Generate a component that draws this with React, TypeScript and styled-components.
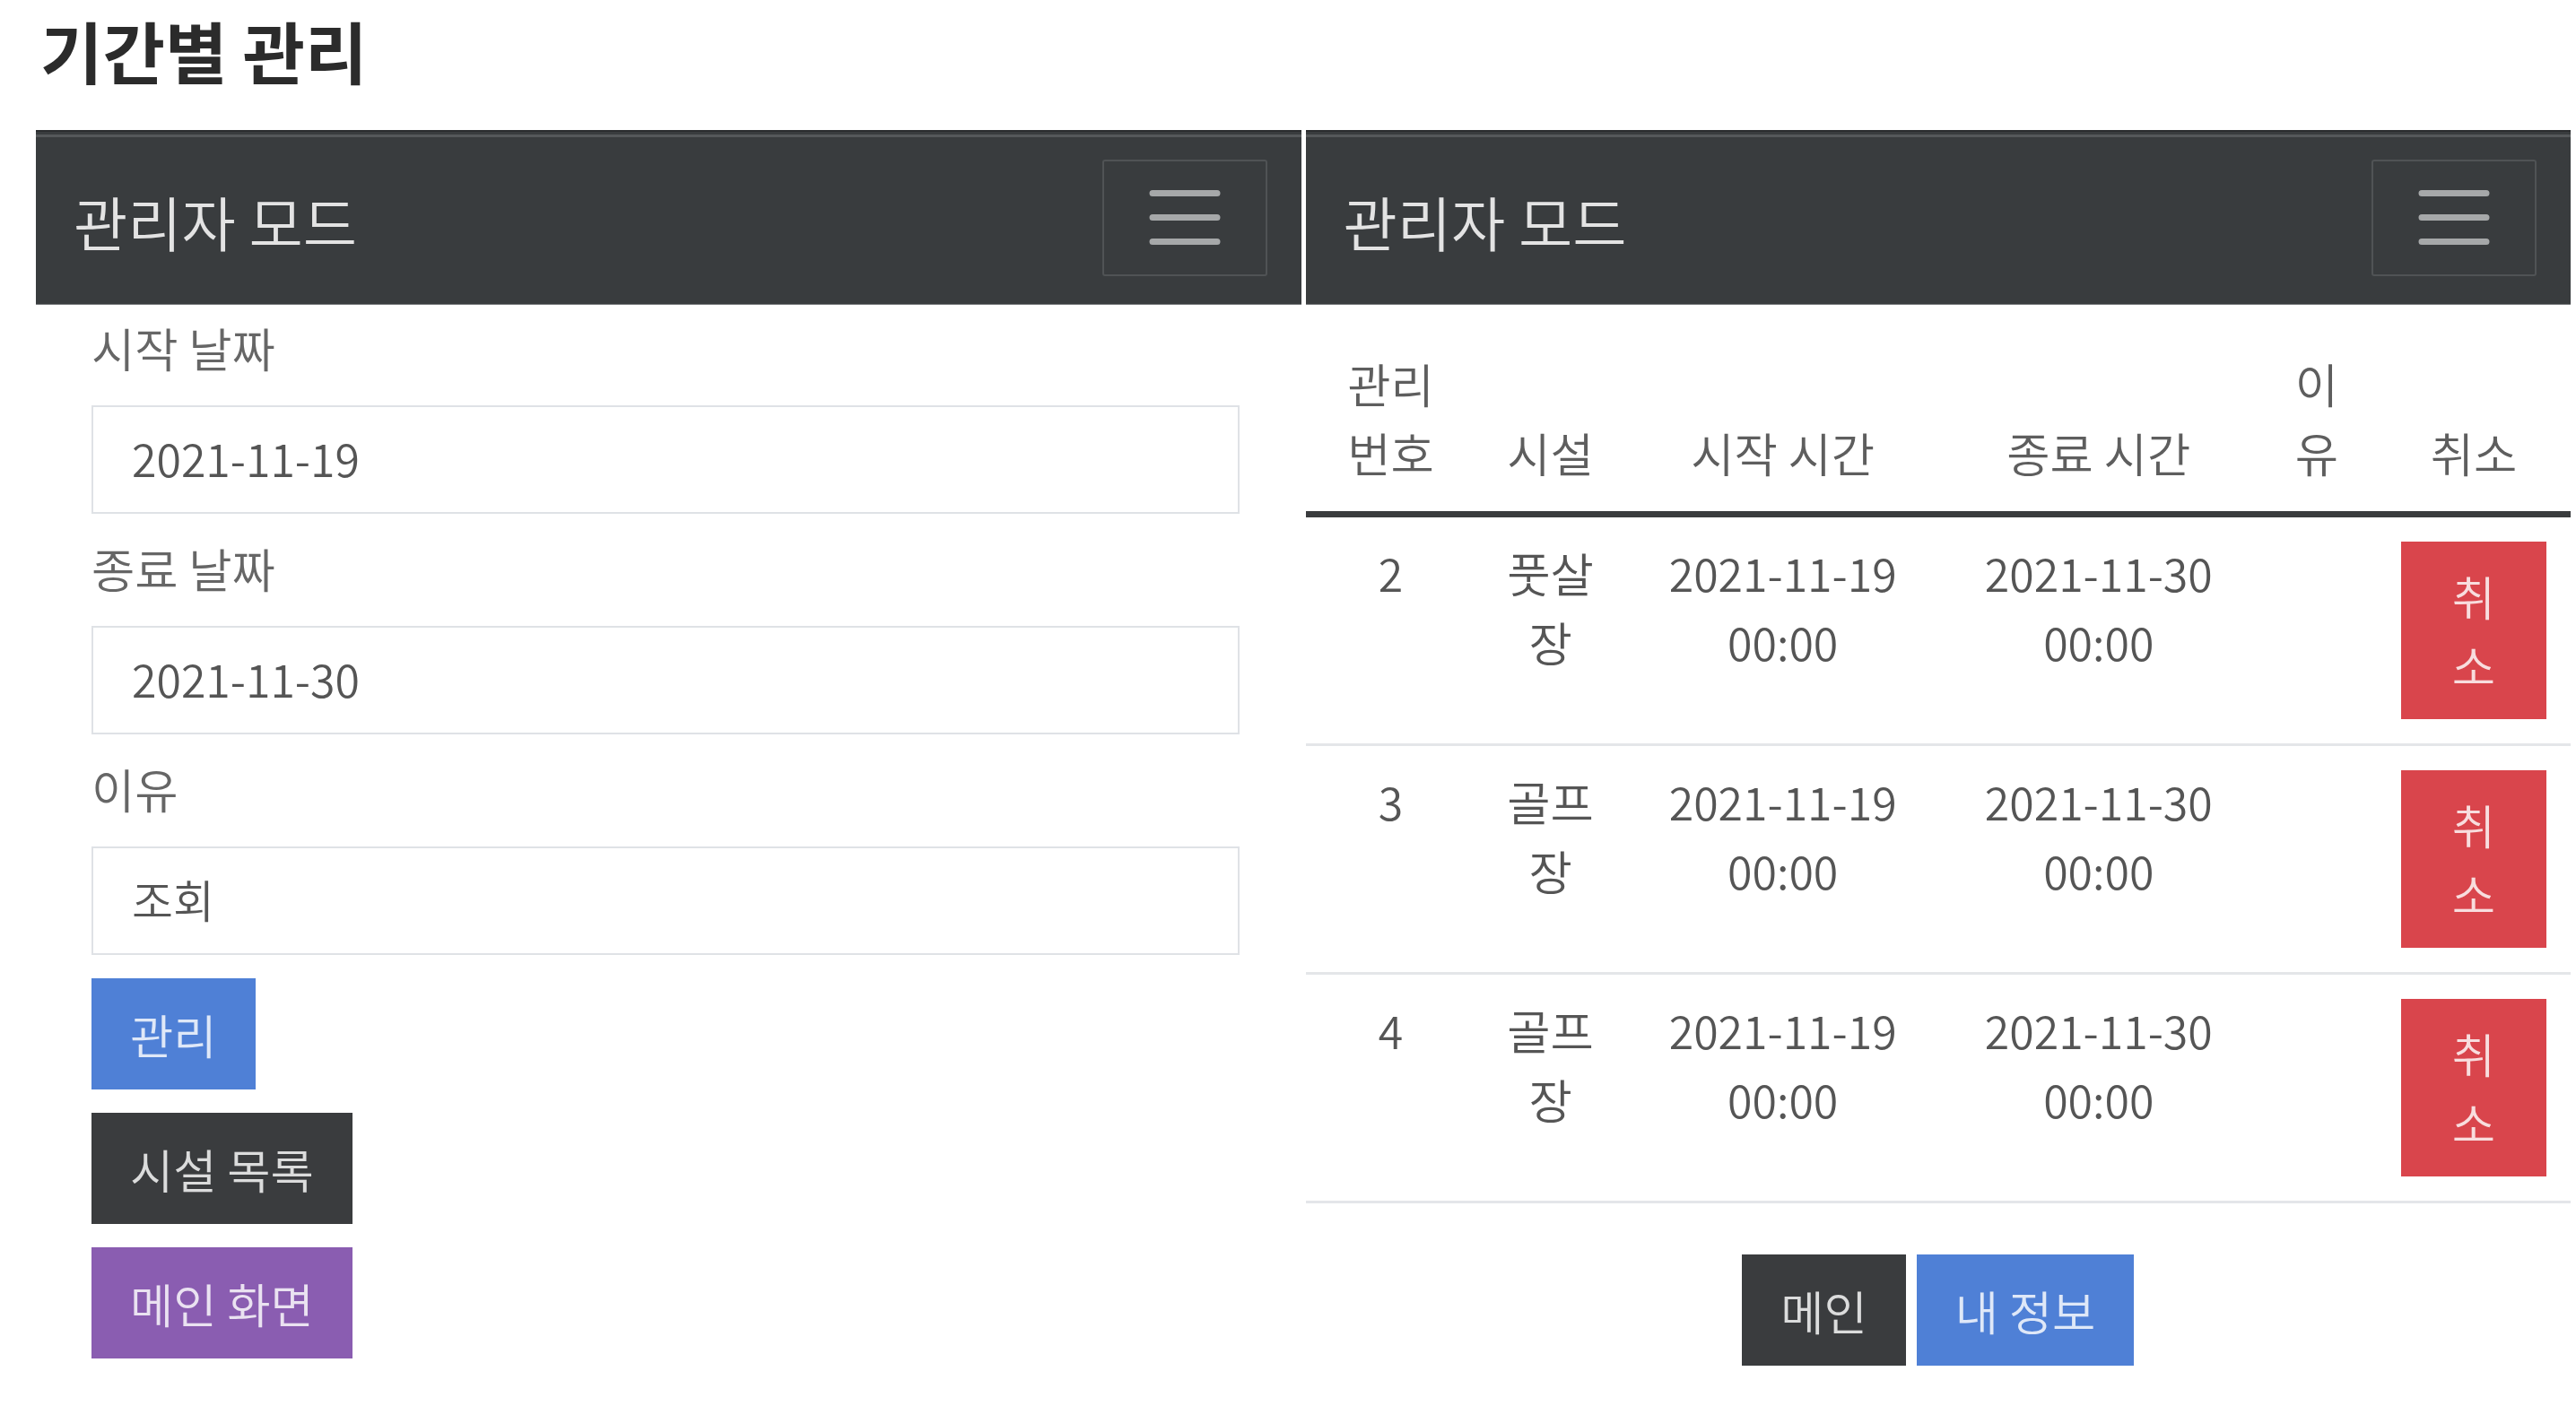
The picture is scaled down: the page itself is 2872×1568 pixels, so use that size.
import React from "react";
import styled, { createGlobalStyle } from "styled-components";

const GlobalStyle = createGlobalStyle`
  * { box-sizing: border-box; }
  html, body { margin: 0; padding: 0; background: #ffffff; }
  body {
    font-family: "Noto Sans CJK KR", "Noto Sans", sans-serif;
    font-weight: 350;
    color: #555555;
  }
`;

const Page = styled.div`
  padding: 10px 6px 40px 40px;
`;

const Title = styled.h1`
  margin: 0 0 0 5px;
  font-size: 75.5px;
  line-height: 1.2;
  font-weight: 700;
  color: #2b2b2b;
`;

const Panels = styled.div`
  display: grid;
  grid-template-columns: 1fr 1fr;
  column-gap: 5px;
  margin-top: 44px;
  align-items: start;
`;

const Panel = styled.section`
  display: flex;
  flex-direction: column;
`;

const Navbar = styled.nav`
  height: 195px;
  display: flex;
  align-items: center;
  justify-content: space-between;
  padding: 0 38px 0 42px;
  background: #393c3e;
  border-top: 2px solid #2a2c2e;
  border-bottom: 1px solid #7a7d7f;
  box-shadow: inset 0 3px 0 #393c3e, inset 0 6px 0 #55585a;
`;

const Brand = styled.span`
  font-size: 65.5px;
  line-height: 1.45;
  padding-top: 10px;
  color: rgba(255, 255, 255, 0.86);
`;

const Toggler = styled.button`
  width: 184px;
  height: 130px;
  display: flex;
  align-items: center;
  justify-content: center;
  background: transparent;
  border: 2px solid #505355;
  border-radius: 3px;
  padding: 0;
`;

const Form = styled.form`
  padding: 8px 69px 0 62px;
  display: flex;
  flex-direction: column;
`;

const FieldLabel = styled.label`
  display: block;
  font-size: 52.5px;
  line-height: 78px;
  color: #666666;
  margin-bottom: 26px;
`;

const TextInput = styled.input`
  display: block;
  width: 100%;
  height: 121px;
  margin: 0 0 21px;
  padding: 0 43px 5px;
  border: 2px solid #dfe2e6;
  border-radius: 0;
  background: #ffffff;
  font-family: inherit;
  font-weight: inherit;
  font-size: 50px;
  color: #555555;
  outline: none;
`;

const ButtonStack = styled.div`
  display: flex;
  flex-direction: column;
  align-items: flex-start;
  gap: 26px;
  margin-top: 5px;
`;

type Variant = "blue" | "dark" | "purple" | "red";

const bg: Record<Variant, string> = {
  blue: "#4f80d6",
  dark: "#3a3c3e",
  purple: "#8a5db1",
  red: "#d9454c",
};

const ActionButton = styled.button<{ $variant: Variant }>`
  display: inline-block;
  padding: ${(p) => (p.$variant === "red" ? "22px 43px" : "23px 43px")};
  border: none;
  border-radius: 0;
  background: ${(p) => bg[p.$variant]};
  color: rgba(255, 255, 255, 0.82);
  font-family: inherit;
  font-weight: inherit;
  font-size: 52.5px;
  line-height: ${(p) => (p.$variant === "red" ? "77px" : "78px")};
  text-align: center;
  cursor: pointer;
`;

const Table = styled.table`
  width: 100%;
  margin-top: 23px;
  border-collapse: collapse;
  table-layout: fixed;
  font-size: 50px;
  line-height: 77px;
  color: #555555;
`;

const HeadCell = styled.th`
  padding: 26px 26px 27px;
  vertical-align: bottom;
  text-align: center;
  font-weight: inherit;
  font-size: 52.5px;
  color: #5e5e5e;
  border-bottom: 7px solid #3a3c3e;
`;

const Cell = styled.td<{ $hangul?: boolean; $action?: boolean }>`
  padding: ${(p) => (p.$action ? "27px" : "23px 27px 31px")};
  vertical-align: top;
  text-align: center;
  font-size: ${(p) => (p.$hangul ? "52.5px" : "50px")};
  border-bottom: 3px solid #e4e6e9;
`;

const FooterButtons = styled.div`
  display: flex;
  justify-content: center;
  gap: 12px;
  margin-top: 57px;
`;

const MenuIcon = () => (
  <svg width="80" height="61" viewBox="0 0 80 61" aria-hidden="true">
    <path
      d="M4 3.5H76M4 30.5H76M4 57.5H76"
      stroke="#a6a8a9"
      strokeWidth="7"
      strokeLinecap="round"
      fill="none"
    />
  </svg>
);

const AdminNav = () => (
  <Navbar>
    <Brand>관리자 모드</Brand>
    <Toggler type="button" aria-label="메뉴">
      <MenuIcon />
    </Toggler>
  </Navbar>
);

const rows = [
  { id: 2, facility: "풋살장", start: "2021-11-19 00:00", end: "2021-11-30 00:00", reason: "" },
  { id: 3, facility: "골프장", start: "2021-11-19 00:00", end: "2021-11-30 00:00", reason: "" },
  { id: 4, facility: "골프장", start: "2021-11-19 00:00", end: "2021-11-30 00:00", reason: "" },
];

const colWidths = [190, 166, 352, 352, 134, 216];

export default function App() {
  return (
    <>
      <GlobalStyle />
      <Page>
        <Title>기간별 관리</Title>
        <Panels>
          <Panel>
            <AdminNav />
            <Form onSubmit={(e) => e.preventDefault()}>
              <FieldLabel htmlFor="start">시작 날짜</FieldLabel>
              <TextInput id="start" defaultValue="2021-11-19" />
              <FieldLabel htmlFor="end">종료 날짜</FieldLabel>
              <TextInput id="end" defaultValue="2021-11-30" />
              <FieldLabel htmlFor="reason">이유</FieldLabel>
              <TextInput id="reason" defaultValue="조회" />
              <ButtonStack>
                <ActionButton type="submit" $variant="blue">관리</ActionButton>
                <ActionButton type="button" $variant="dark">시설 목록</ActionButton>
                <ActionButton type="button" $variant="purple">메인 화면</ActionButton>
              </ButtonStack>
            </Form>
          </Panel>
          <Panel>
            <AdminNav />
            <Table>
              <colgroup>
                {colWidths.map((w, i) => (
                  <col key={i} style={{ width: w }} />
                ))}
              </colgroup>
              <thead>
                <tr>
                  <HeadCell>관리 번호</HeadCell>
                  <HeadCell>시설</HeadCell>
                  <HeadCell>시작 시간</HeadCell>
                  <HeadCell>종료 시간</HeadCell>
                  <HeadCell>이유</HeadCell>
                  <HeadCell>취소</HeadCell>
                </tr>
              </thead>
              <tbody>
                {rows.map((r) => (
                  <tr key={r.id}>
                    <Cell>{r.id}</Cell>
                    <Cell $hangul>{r.facility}</Cell>
                    <Cell>{r.start}</Cell>
                    <Cell>{r.end}</Cell>
                    <Cell $hangul>{r.reason}</Cell>
                    <Cell $action>
                      <ActionButton type="button" $variant="red">취소</ActionButton>
                    </Cell>
                  </tr>
                ))}
              </tbody>
            </Table>
            <FooterButtons>
              <ActionButton type="button" $variant="dark">메인</ActionButton>
              <ActionButton type="button" $variant="blue">내 정보</ActionButton>
            </FooterButtons>
          </Panel>
        </Panels>
      </Page>
    </>
  );
}
